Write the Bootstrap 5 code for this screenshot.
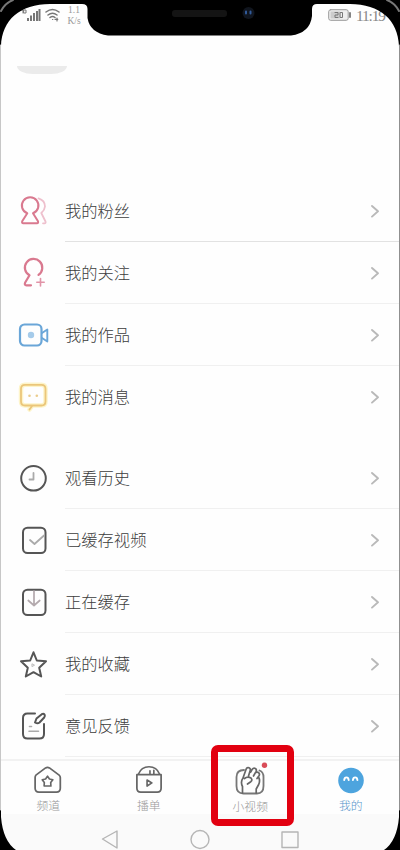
<!DOCTYPE html>
<html lang="zh-CN">
<head>
<meta charset="utf-8">
<meta name="viewport" content="width=device-width, initial-scale=1">
<title>我的</title>
<link href="https://cdn.jsdelivr.net/npm/bootstrap@5.3.0/dist/css/bootstrap.min.css" rel="stylesheet">
<style>
body{font-family:"Liberation Sans","Noto Sans CJK SC",sans-serif;background:#fefefe}
.phone{width:400px;height:850px}
.status{height:66px}
.statusline{height:32px;padding:6px 17px 0 19px}
.serif{font-family:"Liberation Serif",serif;color:#888}
.rate{font-size:9.5px;line-height:11px;color:#999;width:16px;margin:-1px 0 0 4px}
.clock{font-size:15.500px;line-height:20px;letter-spacing:-1.2px;width:27px}
.batt{width:24px;height:12px;margin-top:3px}
.pill{width:50px;height:8px;margin:34px 0 0 17px;background:#ebebeb;border-radius:0 0 16px 16px/0 0 8px 8px}
.menu-top{margin-top:114px}
.menu-next{margin-top:19px}
.entry{height:62px;padding-left:18px}
.entry .ico{width:32px;height:32px;flex:none}
.entry .line{margin-left:15px;height:62px;padding-right:19px;border-bottom:1px solid #f0f0f0}
.menu-top .entry:first-child .line{border-color:#e2e2e2}
.menu-top .entry:last-child .line{border-color:transparent}
.label{font-size:16.3px;line-height:24px;padding-top:1px;color:#3c3c3c;font-weight:300}
svg{display:block;fill:none;stroke-linecap:round;stroke-linejoin:round}
.dark{stroke:#555;stroke-width:2}
.tabs{height:55px;margin-top:2px;border-top:2px solid #f2f2f2}
.tab{width:101px;padding-top:4px;color:#999;font-size:11.8px;line-height:16px;font-weight:300}
.tab:first-child{margin-left:-2px}
.tab svg{width:32px;height:32px}
.tab.on{color:#5795ca}
.tab span{margin-top:2px}
.tab:nth-child(n+3){position:relative;left:1px}
.softkeys{height:36px;background:#fafafa;padding-top:14px}
.frame{z-index:1;pointer-events:none}
.spot{left:211px;top:745px;width:83px;height:81px;border:7px solid #e20010;border-radius:7px;z-index:2}
</style>
<script src="https://cdn.jsdelivr.net/npm/bootstrap@5.3.0/dist/js/bootstrap.bundle.min.js"></script>
</head>
<body class="overflow-hidden">
<svg width="0" height="0" class="position-absolute"><defs>
<symbol id="chev" viewBox="0 0 12 16"><path d="M3 3l6 5.300-6 5.300" stroke="#b9b9b9" stroke-width="1.900"/></symbol>
</defs></svg>
<div class="phone position-relative overflow-hidden d-flex flex-column">
  <header class="status flex-shrink-0">
    <div class="statusline d-flex align-items-start">
      <svg width="22" height="18" viewBox="0 0 22 18"><g stroke="#777" stroke-width="2" stroke-linecap="butt"><path d="M9 15v-3M12 15V9.500M15 15V7M18 15V5M20.500 15V3"/></g><path d="M2 4h2v3M5 4h2v3H5z" stroke="#777"/></svg>
      <svg width="17" height="18" viewBox="0 0 17 18" class="ms-1"><g stroke="#777" stroke-width="1.500"><path d="M1 6q6.500-5 13 0M3 9q4.500-3.500 9 0M5 11.500q2.500-2 5 0"/><path d="M7.500 13.500h.3M10 13.300h2.800M12 12v3" stroke-width="1.200"/></g></svg>
      <div class="rate serif text-center">1.1<br>K/s</div>
      <div class="ms-auto d-flex align-items-start">
        <svg class="batt me-1" viewBox="0 0 24 12"><rect x=".7" y=".7" width="19.500" height="10.600" rx="2" stroke="#999" fill="#eee"/><path d="M2.500 2.500H12v7H2.500z" fill="#ccc"/><path d="M7 3.500h3v2.500H7v2.500h3M12.500 3.500h2v5h-2z" stroke="#777"/><path d="M22 4v4" stroke="#777" stroke-width="1.800"/></svg>
        <span class="clock serif">11:19</span>
      </div>
    </div>
    <div class="pill"></div>
  </header>

  <section class="menu-top flex-shrink-0">
    <div class="entry d-flex align-items-center">
      <svg class="ico" viewBox="0 0 32 32"><path d="M20.500 3.300q6.500 2 6.500 8.200-.3 3.500-3.700 6.500l4.200 8.500q.5 1.800-1 1.800h-1.500" stroke="#eec0cd" stroke-width="1.800"/><path d="M9.300 18.300A8.300 8.300 0 1 1 15 18.300l5 8q.5 2-1 2H5.200q-1.500 0-1-2z" stroke="#d9798f" stroke-width="2"/></svg>
      <div class="line d-flex align-items-center justify-content-between flex-grow-1"><span class="label">我的粉丝</span><svg width="12" height="16"><use href="#chev"/></svg></div>
    </div>
    <div class="entry d-flex align-items-center">
      <svg class="ico" viewBox="0 0 32 32"><path d="M20.500 17.800A8.700 8.700 0 1 0 11.500 18.300L7.200 25.500q-1.200 2.800 1.300 2.800H13" stroke="#d9798f" stroke-width="2.200"/><path d="M22.500 21.500v7.500M18.800 25.300h7.400" stroke="#e193a7" stroke-width="1.600"/></svg>
      <div class="line d-flex align-items-center justify-content-between flex-grow-1"><span class="label">我的关注</span><svg width="12" height="16"><use href="#chev"/></svg></div>
    </div>
    <div class="entry d-flex align-items-center">
      <svg class="ico" viewBox="0 0 32 32"><rect x="2" y="5.500" width="21.500" height="21" rx="4.500" stroke="#6aa6d8" stroke-width="2.200"/><path d="M24 14l5.300-3.500v12l-5.300-3.500" stroke="#6aa6d8" stroke-width="1.900"/><circle cx="13" cy="16" r="3.200" fill="#a5cbea"/></svg>
      <div class="line d-flex align-items-center justify-content-between flex-grow-1"><span class="label">我的作品</span><svg width="12" height="16"><use href="#chev"/></svg></div>
    </div>
    <div class="entry d-flex align-items-center">
      <svg class="ico" viewBox="0 0 32 32"><path d="M14.500 24.500h9q4 0 4-4V7.800q0-4-4-4H7q-4 0-4 4v12.700q0 4 4 4h7.500l-3 4" stroke="#fdf4c9" stroke-width="4.500"/><path d="M14.500 24.500h9q4 0 4-4V7.800q0-4-4-4H7q-4 0-4 4v12.700q0 4 4 4h7.500l-3 4" stroke="#ebc67a" stroke-width="1.800"/><circle cx="11.500" cy="14.700" r="1.300" fill="#ebcc8b"/><circle cx="18.800" cy="14.700" r="1.300" fill="#ebcc8b"/></svg>
      <div class="line d-flex align-items-center justify-content-between flex-grow-1"><span class="label">我的消息</span><svg width="12" height="16"><use href="#chev"/></svg></div>
    </div>
  </section>

  <section class="menu-next flex-shrink-0">
    <div class="entry d-flex align-items-center">
      <svg class="ico" viewBox="0 0 32 32"><circle cx="15.500" cy="16.300" r="12.300" class="dark"/><path d="M15.500 11v6.500h-4" stroke="#aaa" stroke-width="1.800"/></svg>
      <div class="line d-flex align-items-center justify-content-between flex-grow-1"><span class="label">观看历史</span><svg width="12" height="16"><use href="#chev"/></svg></div>
    </div>
    <div class="entry d-flex align-items-center">
      <svg class="ico" viewBox="0 0 32 32"><rect x="5" y="3.700" width="22.500" height="25.400" rx="4.500" class="dark"/><path d="M12 16l4.500 4 9.500-8.500" stroke="#aaa" stroke-width="1.800"/></svg>
      <div class="line d-flex align-items-center justify-content-between flex-grow-1"><span class="label">已缓存视频</span><svg width="12" height="16"><use href="#chev"/></svg></div>
    </div>
    <div class="entry d-flex align-items-center">
      <svg class="ico" viewBox="0 0 32 32"><rect x="5" y="3.700" width="22.500" height="25.400" rx="4.500" class="dark"/><path d="M16 5v14M10.300 14.500l5.700 5 5.700-5" stroke="#b3a9ad" stroke-width="1.700"/></svg>
      <div class="line d-flex align-items-center justify-content-between flex-grow-1"><span class="label">正在缓存</span><svg width="12" height="16"><use href="#chev"/></svg></div>
    </div>
    <div class="entry d-flex align-items-center">
      <svg class="ico" viewBox="0 0 32 32"><path d="M15.500 4.300l3.300 8.200 9.200.8-6.800 6.500 2 8.700-7.700-4.300-7.700 4.300 2-8.700L3 13.300l9.200-.8z" class="dark"/><path d="M14.300 16l2.200 1.200-2.200 1.200z" stroke="#bbb"/></svg>
      <div class="line d-flex align-items-center justify-content-between flex-grow-1"><span class="label">我的收藏</span><svg width="12" height="16"><use href="#chev"/></svg></div>
    </div>
    <div class="entry d-flex align-items-center">
      <svg class="ico" viewBox="0 0 32 32"><path d="M17 3.500H9.500Q5 3.500 5 8v16q0 4.500 4.500 4.500h12Q26 28.500 26 24V14" class="dark"/><path d="M17 12.500l1.500-4 5.300-4.300q1.700-1 2.800.5.8 1.500-.4 2.800l-4.700 5q-1.800 1.500-4.500 0z" class="dark"/><path d="M11.500 16.500h2M11 21.300h9.500" stroke="#aaa" stroke-width="1.600"/></svg>
      <div class="line d-flex align-items-center justify-content-between flex-grow-1"><span class="label">意见反馈</span><svg width="12" height="16"><use href="#chev"/></svg></div>
    </div>
  </section>

  <nav class="tabs d-flex flex-shrink-0">
    <a class="tab d-flex flex-column align-items-center text-decoration-none">
      <svg viewBox="0 0 32 32"><path d="M3.500 10.500L13.500 3q2-1.300 4 0l10 7.500q1.200 1 1.200 2.500V24q0 4-4 4h-18q-4 0-4-4V13q0-1.500.8-2.500z" stroke="#666" stroke-width="1.800"/><path d="M15.500 11.500l2 3 3.500.8-2.200 2.800.2 3.600h-7l.2-3.600-2.200-2.800 3.500-.8z" stroke="#666" stroke-width="1.700"/></svg>
      <span>频道</span></a>
    <a class="tab d-flex flex-column align-items-center text-decoration-none">
      <svg viewBox="0 0 32 32"><path d="M3.500 10h25v14q0 4-4 4h-17q-4 0-4-4z" stroke="#666" stroke-width="1.800"/><path d="M5 9.500Q8 1.800 16 1.800t11 7.700M17 6v3.500M21 5.500v4" stroke="#666" stroke-width="1.700"/><path d="M14 15.500l5 3-5 3.200z" stroke="#666" stroke-width="1.700"/></svg>
      <span>播单</span></a>
    <a class="tab d-flex flex-column align-items-center text-decoration-none">
      <svg viewBox="0 0 32 32" overflow="visible"><path d="M10 5Q2.500 5 2.500 12v9q0 7.500 7 7.500h13.500q6.500 0 6.500-7.500v-9q0-5-4-6.500" stroke="#777" stroke-width="1.800"/><path d="M8.500 28v-6.500q-2.300-4.500.5-8.500l3-8.500q1-2.500 3-1.700 1.800.8 1.200 2.700L14.500 11M16.700 7l1.500-2.700q1.500-2 3.200-.8 1.500 1 .7 2.800L19.500 11M21.800 7.500q1.700-1 3 .3 1.200 1.300.2 3L23 13.500M10.500 13.500q3-2.500 6.500-.5 1.800 2-.2 3.700L13.500 19M24.500 12q2 3.500.2 7.500l-2.500 4.500v4" stroke="#666" stroke-width="1.700"/><circle cx="30.500" cy=".3" r="2.700" fill="#d94c58"/></svg>
      <span>小视频</span></a>
    <a class="tab on d-flex flex-column align-items-center text-decoration-none">
      <svg viewBox="0 0 32 32"><circle cx="16" cy="16" r="13.200" fill="#4da4de"/><path d="M9 15.500q.3-2.700 2.300-2.700t2.300 2.700M18 15.500q.3-2.700 2.300-2.700t2.300 2.700" stroke="#fff" stroke-width="2"/></svg>
      <span>我的</span></a>
  </nav>

  <footer class="softkeys d-flex flex-shrink-0" aria-label="导航键">
    <svg width="400" height="22" viewBox="0 0 400 22"><g stroke="#b5b5b5" stroke-width="1.400"><path d="M117 3v17L102.500 11z"/><circle cx="200" cy="11.500" r="9"/><rect x="282" y="4" width="16" height="15.500"/></g></svg>
  </footer>

  <svg class="frame position-absolute top-0 start-0" width="400" height="850" viewBox="0 0 400 850">
    <path fill="#000" fill-rule="evenodd" d="M0 0H400V850H384Q397 841 399 817V46C398 20 380 4 350 4H317Q312 4 312 9V16Q310 33 291 35.500H108Q90 33 87.500 18V9Q87.500 4 82 4H50C20 4 2 20 1 46V817Q3 841 16 850H0z"/>
    <path d="M.5 45V810" stroke="#c7c7c7"/><path d="M399.500 45V810" stroke="#909090"/>
    <path d="M1 11Q5 3 13 0M387 0q8 3 12 11" stroke="#777" stroke-width="2"/>
    <rect x="172" y="10" width="55" height="7" rx="3" fill="#141414"/>
    <circle cx="248.500" cy="13" r="6" fill="#10151e"/><path d="M246 11.500v2M250.500 11.500v2" stroke="#315b9b" stroke-width="2"/>
  </svg>
  <div class="spot position-absolute"></div>
</div>
</body>
</html>
